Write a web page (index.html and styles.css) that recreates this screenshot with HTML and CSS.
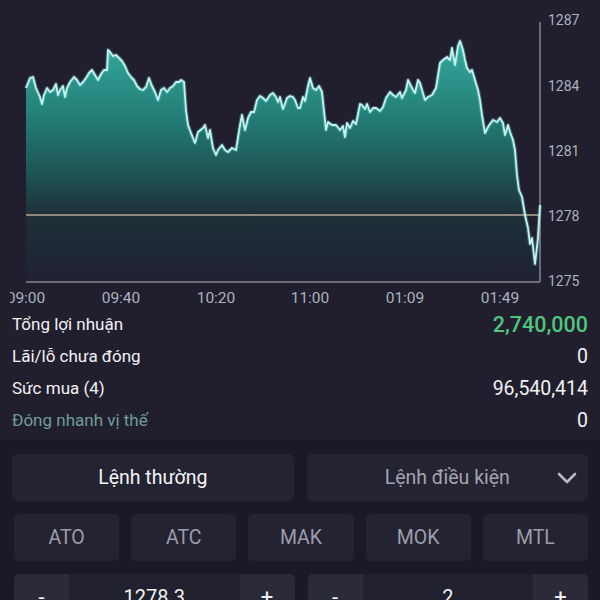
FILE: index.html
```html
<!DOCTYPE html>
<html lang="vi">
<head>
  <meta charset="UTF-8" />
  <meta name="viewport" content="width=device-width, initial-scale=1.0" />
  <title>Giao dịch phái sinh</title>
  <link rel="stylesheet" href="styles.css">
</head>
<body>
  <div class="chart">
    <svg width="600" height="308" viewBox="0 0 600 308">
      <defs>
        <linearGradient id="fillGrad" gradientUnits="userSpaceOnUse" x1="0" y1="40" x2="0" y2="282">
          <stop offset="0" stop-color="#36ab9d" />
          <stop offset="0.3" stop-color="#24807a" />
          <stop offset="0.55" stop-color="#1d5454" />
          <stop offset="0.72" stop-color="#1e3038" />
          <stop offset="1" stop-color="#1f2132" />
        </linearGradient>
        <clipPath id="labelClip">
          <rect x="10" y="0" width="590" height="308" />
        </clipPath>
      </defs>

      <!-- area under price -->
      <polygon id="area" fill="url(#fillGrad)" points="" />

      <!-- axes -->
      <line class="axis" x1="26" y1="282" x2="540" y2="282" />
      <line class="axis" x1="540" y1="22" x2="540" y2="282" />
      <line class="ref" x1="26" y1="215" x2="540" y2="215" />

      <polyline id="glow" class="glow" points="" />
      <polyline id="price" class="price" points="" />

      <g class="ylabels">
        <text x="548" y="25">1287</text>
        <text x="548" y="91">1284</text>
        <text x="548" y="156">1281</text>
        <text x="548" y="221">1278</text>
        <text x="548" y="286">1275</text>
      </g>
      <g class="xlabels" clip-path="url(#labelClip)">
        <text x="26" y="303">09:00</text>
        <text x="121" y="303">09:40</text>
        <text x="216" y="303">10:20</text>
        <text x="310" y="303">11:00</text>
        <text x="405" y="303">01:09</text>
        <text x="500" y="303">01:49</text>
      </g>
    </svg>
  </div>

  <div class="info">
    <div class="row"><span>Tổng lợi nhuận</span><span class="num profit">2,740,000</span></div>
    <div class="row"><span>Lãi/lỗ chưa đóng</span><span class="num">0</span></div>
    <div class="row"><span>Sức mua (4)</span><span class="num">96,540,414</span></div>
    <div class="row"><span class="muted">Đóng nhanh vị thế</span><span class="num">0</span></div>
  </div>

  <div class="order">
    <div class="tabs">
      <div class="tab active">Lệnh thường</div>
      <div class="tab">
        Lệnh điều kiện
        <svg class="chevron" width="20" height="12" viewBox="0 0 20 12">
          <polyline points="2,2 10,10 18,2" />
        </svg>
      </div>
    </div>
    <div class="types">
      <div class="type">ATO</div>
      <div class="type">ATC</div>
      <div class="type">MAK</div>
      <div class="type">MOK</div>
      <div class="type">MTL</div>
    </div>
    <div class="inputs">
      <div class="stepper">
        <div class="step">-</div>
        <div class="value">1278.3</div>
        <div class="step">+</div>
      </div>
      <div class="stepper">
        <div class="step">-</div>
        <div class="value">2</div>
        <div class="step">+</div>
      </div>
    </div>
  </div>

  <script>
    // price points traced from the intraday chart
    const pts = [
      [26,88],[30,78],[33,77],[36,88],[40,97],[42,104],[44,95],[47,88],[50,92],[53,90],[56,84],[58,95],
      [60,90],[63,86],[65,97],[67,88],[70,82],[74,77],[77,80],[80,85],[83,82],[86,78],[89,73],[92,70],
      [95,75],[98,80],[101,74],[104,70],[107,70],[108,50],[110,52],[113,56],[116,55],[119,58],[122,61],
      [125,66],[128,73],[131,77],[134,80],[137,86],[140,89],[143,90],[146,87],[149,78],[152,86],[155,92],
      [158,100],[161,90],[164,88],[167,92],[170,88],[173,86],[176,82],[179,82],[181,80],[184,82],[186,110],
      [188,125],[191,133],[195,143],[198,132],[203,128],[205,125],[208,138],[210,130],[213,148],[216,155],
      [218,150],[222,145],[225,150],[228,152],[232,148],[236,150],[240,125],[242,115],[245,130],[248,118],
      [251,112],[254,112],[257,100],[260,96],[263,98],[266,101],[270,95],[273,93],[276,97],[278,102],
      [280,97],[283,109],[287,98],[290,96],[293,97],[295,100],[298,108],[300,108],[303,97],[305,101],
      [308,86],[310,78],[313,88],[316,90],[319,86],[322,92],[326,130],[328,122],[332,125],[336,125],
      [340,130],[343,126],[345,137],[347,123],[350,128],[353,121],[356,124],[360,104],[362,105],[365,109],
      [367,104],[370,112],[373,108],[376,108],[380,111],[383,107],[386,98],[390,92],[393,95],[396,97],
      [400,92],[402,98],[406,90],[408,80],[412,88],[415,93],[418,80],[420,83],[425,100],[428,97],[432,95],
      [436,88],[440,63],[443,60],[447,57],[450,60],[452,48],[455,65],[458,46],[460,41],[463,50],[465,60],
      [467,68],[470,72],[472,70],[475,80],[478,90],[480,100],[482,115],[485,133],[488,127],[490,124],
      [493,120],[497,122],[500,118],[503,123],[505,135],[508,125],[510,132],[513,140],[515,150],[517,175],
      [519,190],[522,197],[525,215],[528,228],[530,244],[532,238],[535,264],[538,238],[540,205]
    ];
    const line = pts.map(p => p.join(',')).join(' ');
    document.getElementById('price').setAttribute('points', line);
    document.getElementById('glow').setAttribute('points', line);
    document.getElementById('area').setAttribute('points', '26,282 ' + line + ' 540,282');
  </script>
</body>
</html>
```

FILE: styles.css
```css
body {
  margin: 0;
  padding: 0;
  width: 600px;
  height: 600px;
  overflow: hidden;
  background-color: #211f2e;
  color: #f1f1f4;
  font-family: Roboto, "Noto Sans", sans-serif;
}

.chart svg {
  display: block;
}

.axis {
  stroke: #6c6b78;
  stroke-width: 2;
}

.ref {
  stroke: #8d877d;
  stroke-width: 2;
}

.glow {
  fill: none;
  stroke: #7fe3dc;
  stroke-opacity: 0.3;
  stroke-width: 4;
  stroke-linejoin: round;
}

.price {
  fill: none;
  stroke: #c2f3f0;
  stroke-width: 1.8;
  stroke-linejoin: round;
}

.ylabels text {
  fill: #aab3bf;
  font-size: 14px;
}

.xlabels text {
  fill: #aab3bf;
  font-size: 15.5px;
  text-anchor: middle;
}

.info {
  padding: 0 12px 4px 12px;
}

.row {
  height: 32px;
  display: flex;
  justify-content: space-between;
  align-items: center;
  font-size: 17px;
}

.num {
  font-size: 19.5px;
}

.profit {
  color: #4fc57d;
  font-size: 21.5px;
  font-weight: 500;
}

.muted {
  color: #6f9d9b;
}

.order {
  background-color: #1a1926;
  padding: 14px 12px 0 12px;
  display: flex;
  flex-direction: column;
  gap: 13px;
  height: 200px;
}

.tabs {
  display: grid;
  grid-template-columns: 1fr 1fr;
  gap: 13px;
}

.tab {
  height: 47px;
  border-radius: 5px;
  background-color: #242332;
  display: flex;
  align-items: center;
  justify-content: center;
  font-size: 19.5px;
  color: #a3a3b0;
  position: relative;
}

.tab.active {
  color: #f4f4f6;
}

.chevron {
  position: absolute;
  right: 11px;
  top: 18px;
}

.chevron polyline {
  fill: none;
  stroke: #b8b8c2;
  stroke-width: 2.6;
  stroke-linecap: round;
  stroke-linejoin: round;
}

.types {
  display: grid;
  grid-template-columns: repeat(5, 1fr);
  gap: 12px;
  padding-left: 2px;
}

.type {
  height: 47px;
  border-radius: 5px;
  background-color: #242332;
  display: flex;
  align-items: center;
  justify-content: center;
  font-size: 19.5px;
  color: #9d9daa;
}

.inputs {
  display: grid;
  grid-template-columns: 1fr 1fr;
  gap: 13px;
  padding-left: 2px;
}

.stepper {
  height: 46px;
  border-radius: 5px;
  overflow: hidden;
  display: flex;
  background-color: #21202f;
}

.step {
  width: 55px;
  background-color: #2b2a39;
  display: flex;
  align-items: center;
  justify-content: center;
  font-size: 22px;
  color: #f2f2f4;
}

.value {
  flex: 1;
  display: flex;
  align-items: center;
  justify-content: center;
  font-size: 20px;
  color: #f2f2f4;
}
```
